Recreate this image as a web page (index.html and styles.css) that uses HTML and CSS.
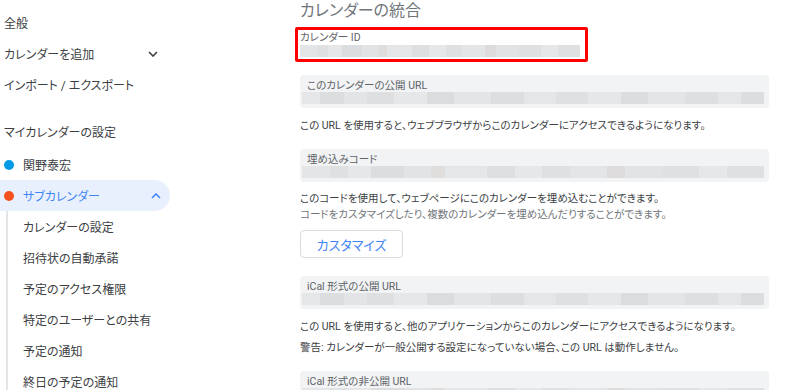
FILE: index.html
```html
<!DOCTYPE html>
<html lang="ja">

<head>
    <meta charset="utf-8" />
    <meta name="viewport" content="width=device-width, initial-scale=1.0" />
    <title>設定 - カレンダーの統合</title>
    <link rel="stylesheet" href="styles.css">
</head>

<body>
    <div class="page">
        <nav class="sidebar">
            <a class="nav-item">全般</a>
            <a class="nav-item">カレンダーを追加
                <svg class="chevron" viewBox="0 0 10 6" width="10" height="6"><path d="M1 1l4 4 4-4" /></svg>
            </a>
            <a class="nav-item">インポート / エクスポート</a>

            <div class="nav-head">マイカレンダーの設定</div>
            <a class="nav-item"><span class="dot dot-blue"></span>関野泰宏</a>
            <a class="nav-item active"><span class="dot dot-orange"></span>サブカレンダー
                <svg class="chevron" viewBox="0 0 10 6" width="10" height="6"><path d="M1 5l4-4 4 4" /></svg>
            </a>
            <div class="sub-list">
                <a class="nav-item sub">カレンダーの設定</a>
                <a class="nav-item sub">招待状の自動承諾</a>
                <a class="nav-item sub">予定のアクセス権限</a>
                <a class="nav-item sub">特定のユーザーとの共有</a>
                <a class="nav-item sub">予定の通知</a>
                <a class="nav-item sub">終日の予定の通知</a>
            </div>
        </nav>

        <main class="content">
            <h2 class="title">カレンダーの統合</h2>

            <div class="id-box">
                <div class="field-label">カレンダー ID</div>
                <div class="mosaic"></div>
            </div>

            <div class="field">
                <div class="field-label">このカレンダーの公開 URL</div>
                <div class="mosaic alt"></div>
            </div>
            <p class="note">この URL を使用すると、ウェブブラウザからこのカレンダーにアクセスできるようになります。</p>

            <div class="field gap-lg">
                <div class="field-label">埋め込みコード</div>
                <div class="mosaic"></div>
            </div>
            <p class="note tight">このコードを使用して、ウェブページにこのカレンダーを埋め込むことができます。</p>
            <p class="note sub-note">コードをカスタマイズしたり、複数のカレンダーを埋め込んだりすることができます。</p>
            <button class="btn">カスタマイズ</button>

            <div class="field gap-xl">
                <div class="field-label">iCal 形式の公開 URL</div>
                <div class="mosaic alt"></div>
            </div>
            <p class="note">この URL を使用すると、他のアプリケーションからこのカレンダーにアクセスできるようになります。</p>
            <p class="note warn">警告: カレンダーが一般公開する設定になっていない場合、この URL は動作しません。</p>

            <div class="field gap-lg">
                <div class="field-label">iCal 形式の非公開 URL</div>
                <div class="mosaic"></div>
            </div>
        </main>
    </div>
</body>

</html>
```

FILE: styles.css
```css
html,
body {
    margin: 0;
    background-color: #fff;
    font-family: Roboto, "Noto Sans CJK JP", sans-serif;
    font-feature-settings: "palt";
    color: #3c4043;
    overflow: hidden;
}

.page {
    display: flex;
    height: 390px;
}

/* sidebar */
.sidebar {
    width: 172px;
    flex-shrink: 0;
    padding-top: 7px;
}

.nav-item {
    display: flex;
    align-items: center;
    height: 31px;
    padding: 0 14px 0 4px;
    font-size: 12px;
    color: #3c4043;
    text-decoration: none;
    white-space: nowrap;
    box-sizing: border-box;
}

.nav-head {
    height: 31px;
    line-height: 31px;
    margin-top: 18px;
    padding-left: 4px;
    font-size: 12px;
    color: #3c4043;
    white-space: nowrap;
}

.chevron {
    margin-left: auto;
    fill: none;
    stroke: #3c4043;
    stroke-width: 1.6;
}

.dot {
    width: 10px;
    height: 10px;
    border-radius: 50%;
    margin-right: 9px;
}

.dot-blue {
    background-color: #039be5;
}

.dot-orange {
    background-color: #f4511e;
}

.nav-item.active {
    background-color: #e8f0fe;
    color: #4285f4;
    border-radius: 0 16px 16px 0;
    width: 170px;
    padding-right: 9px;
}

.nav-item.active .chevron {
    stroke: #4285f4;
}

.sub-list {
    margin-left: 6px;
    border-left: 2px solid #e3e4e6;
}

.nav-item.sub {
    padding-left: 15px;
}

/* content */
.content {
    margin-left: 128px;
    width: 469px;
}

.title {
    margin: 0;
    height: 22px;
    line-height: 22px;
    font-size: 16px;
    font-weight: 400;
    color: #70757a;
}

.id-box {
    margin: 5px 0 0 -5px;
    width: 293px;
    border: 3px solid #ff0000;
    border-radius: 2px;
    padding: 1px 5px 2px 2px;
    box-sizing: border-box;
}

.id-box .field-label {
    padding-left: 0;
    line-height: 14px;
}

.field {
    margin-top: 13px;
    padding: 4px 5px 4px 2px;
    background-color: #f1f3f4;
    border-radius: 4px;
}

.field.gap-lg {
    margin-top: 15px;
}

.field.gap-xl {
    margin-top: 18px;
}

.field-label {
    padding-left: 5px;
    font-size: 10.5px;
    line-height: 13px;
    color: #5f6368;
    white-space: nowrap;
}

.mosaic {
    height: 12px;
    background: linear-gradient(90deg, #e4e5e7 0 6%, #dfe0e2 6% 10%, #e6e7e8 10% 15%, #dcdddf 15% 22%, #e2e3e5 22% 28%, #e0dedd 28% 31%, #e5e6e7 31% 40%, #dedfe1 40% 46%, #e6e7e8 46% 52%, #dfe0e2 52% 58%, #e4e5e6 58% 66%, #dddbdb 66% 70%, #e2e3e5 70% 78%, #dfe0e2 78% 86%, #e6e7e8 86% 92%, #dfe0e2 92% 100%);
}

.mosaic.alt {
    background: linear-gradient(90deg, #e5e6e7 0 4%, #dcdddf 4% 9%, #e3e4e6 9% 14%, #dedfe1 14% 20%, #e6e7e8 20% 27%, #dbdcde 27% 33%, #e4e5e7 33% 41%, #dddee0 41% 48%, #e5e6e8 48% 55%, #dfe0e2 55% 62%, #e6e7e8 62% 69%, #dcdddf 69% 75%, #e4e5e6 75% 83%, #dedfe1 83% 90%, #e5e6e7 90% 95%, #dcdddf 95% 100%);
}

.note {
    margin: 10px 0 0;
    font-size: 10.5px;
    line-height: 16px;
    color: #3c4043;
    white-space: nowrap;
}

.note.tight {
    margin-top: 9px;
}

.note.sub-note {
    margin-top: 0;
    color: #70757a;
}

.note.warn {
    margin-top: 5px;
}

.btn {
    display: block;
    margin-top: 7px;
    width: 103px;
    height: 28px;
    padding: 0;
    background-color: #fff;
    border: 1px solid #dadce0;
    border-radius: 4px;
    font-family: Roboto, "Noto Sans CJK JP", sans-serif;
    font-feature-settings: "palt";
    font-size: 13px;
    color: #4285f4;
    outline: none;
}
```
